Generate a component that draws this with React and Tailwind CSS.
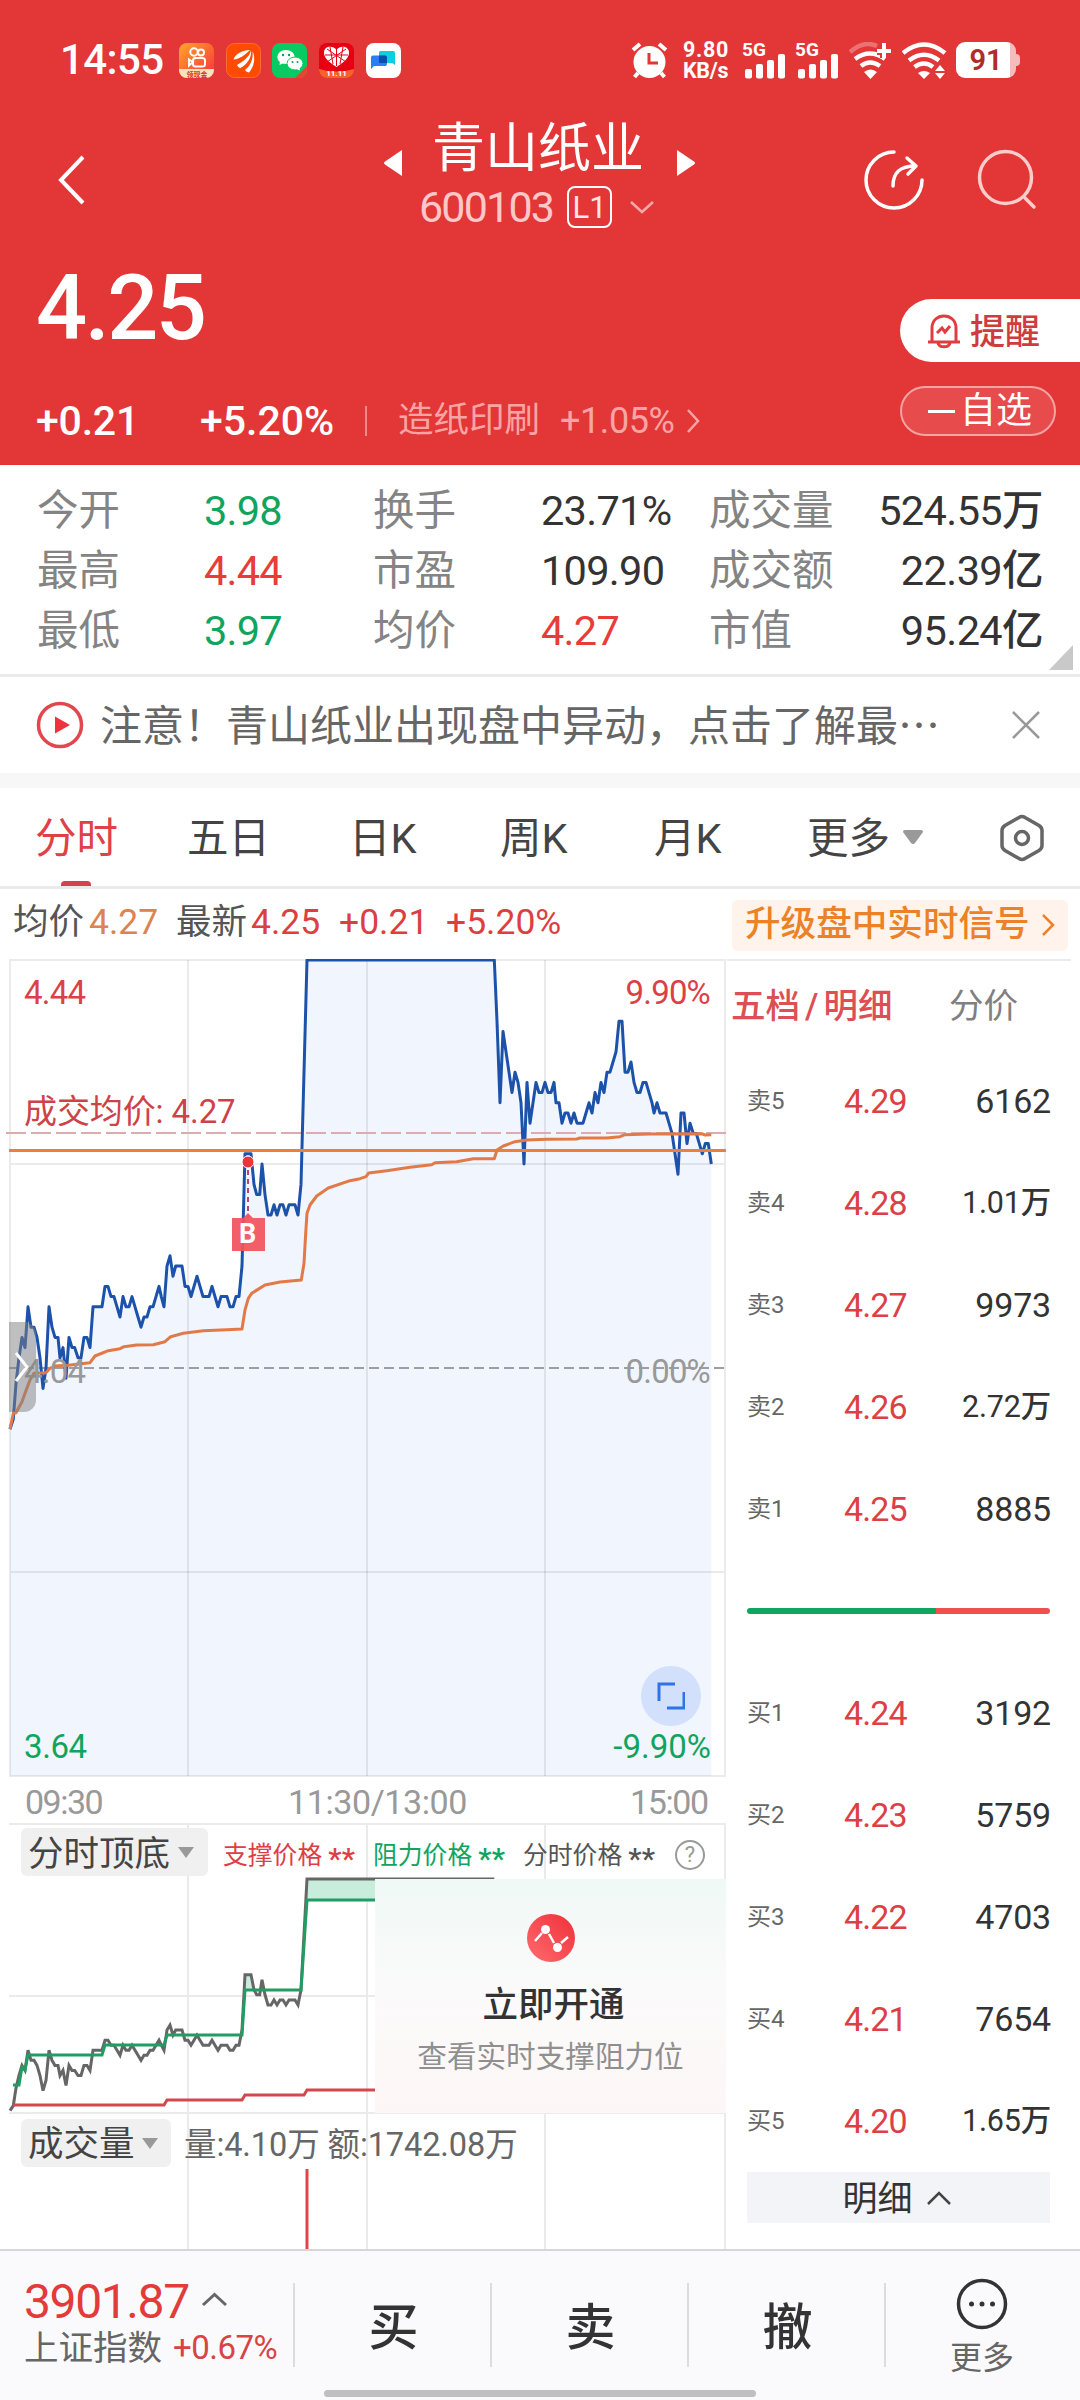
import React from 'react'

const STATS = [
  ['今开', '3.98', 'text-[#11a45e]', '换手', '23.71%', 'text-[#333]', '成交量', '524.55万'],
  ['最高', '4.44', 'text-[#e83c38]', '市盈', '109.90', 'text-[#333]', '成交额', '22.39亿'],
  ['最低', '3.97', 'text-[#11a45e]', '均价', '4.27', 'text-[#e83c38]', '市值', '95.24亿'],
]

const SELLS = [
  ['卖5', '4.29', '6162'],
  ['卖4', '4.28', '1.01万'],
  ['卖3', '4.27', '9973'],
  ['卖2', '4.26', '2.72万'],
  ['卖1', '4.25', '8885'],
]

const BUYS = [
  ['买1', '4.24', '3192'],
  ['买2', '4.23', '5759'],
  ['买3', '4.22', '4703'],
  ['买4', '4.21', '7654'],
  ['买5', '4.20', '1.65万'],
]

// [x, ticks above the previous close], x in thirds of a pixel
const PRICES = [
  [30, -6], [40, -5], [48, -1.5], [57, 1], [66, 3], [75, 2], [84, 6], [93, 4], [102, 4], [111, 3], [120, 1], [129, -2],
  [138, 0], [147, 6], [156, 4], [165, 3], [174, 3], [180, 1], [189, 2], [198, -1], [207, 3], [216, 2], [224, 2],
  [234, 1], [243, 1], [252, 3], [261, 3], [270, 2], [279, 6], [306, 6], [315, 8], [324, 8], [333, 7], [342, 7],
  [351, 6], [360, 5], [369, 7], [378, 6], [387, 6], [396, 7], [405, 6], [414, 5], [423, 4], [432, 5], [441, 5],
  [450, 6], [459, 6], [468, 7], [477, 8], [484, 7], [492, 6], [501, 10], [510, 11], [519, 9], [527, 10], [546, 10],
  [555, 8], [564, 8], [573, 7], [582, 8], [591, 9], [600, 8], [609, 7], [627, 7], [636, 8], [645, 7], [654, 6],
  [663, 7], [681, 7], [690, 6], [699, 6], [708, 7], [717, 7], [726, 10], [735, 21], [753, 21], [762, 18], [770, 17],
  [779, 17], [786, 20], [795, 17], [804, 15], [813, 15], [822, 16], [831, 15], [840, 16], [849, 16], [858, 15],
  [867, 16], [885, 16], [894, 15], [903, 18], [921, 40], [1483, 40], [1491, 34], [1500, 26], [1509, 33], [1518, 31],
  [1527, 29], [1536, 27], [1545, 29], [1554, 28], [1563, 26], [1572, 20], [1581, 28], [1590, 24], [1599, 26],
  [1608, 28], [1617, 27], [1626, 27], [1635, 28], [1644, 27], [1653, 27], [1662, 28], [1668, 26], [1677, 26],
  [1686, 24], [1695, 25], [1704, 25], [1713, 24], [1722, 25], [1731, 24], [1749, 24], [1758, 25], [1767, 26],
  [1776, 25], [1785, 27], [1794, 26], [1803, 28], [1812, 27], [1821, 29], [1830, 29], [1839, 30], [1848, 31],
  [1857, 34], [1866, 34], [1875, 29], [1884, 29], [1893, 30], [1902, 28], [1911, 27], [1920, 27], [1929, 28],
  [1938, 28], [1947, 27], [1956, 26], [1962, 25], [1971, 26], [1980, 25], [1998, 25], [2007, 24], [2016, 23],
  [2025, 21], [2034, 19], [2043, 25], [2052, 25], [2061, 22], [2070, 24], [2080, 23], [2089, 23], [2098, 22],
  [2107, 21], [2116, 22], [2125, 22], [2134, 20],
]

// running average, both axes in thirds of a pixel
const AVERAGE = [
  [30, 1467], [40, 1420], [48, 1418], [66, 1385], [75, 1360], [90, 1320], [102, 1300], [138, 1298], [150, 1285],
  [165, 1278], [205, 1276], [270, 1268], [285, 1248], [325, 1232], [360, 1226], [372, 1220], [410, 1215],
  [460, 1214], [495, 1205], [512, 1190], [550, 1180], [610, 1172], [680, 1169], [726, 1167], [735, 1110],
  [745, 1075], [755, 1060], [795, 1035], [840, 1026], [904, 1020], [912, 970], [917, 880], [921, 820], [930, 795],
  [950, 768], [985, 744], [1050, 722], [1080, 716], [1098, 710], [1106, 699], [1160, 692], [1230, 682],
  [1295, 674], [1305, 668], [1370, 665], [1420, 656], [1483, 656], [1491, 630], [1510, 618], [1545, 605],
  [1580, 600], [1640, 598], [1730, 597], [1740, 594], [1820, 594], [1860, 590], [1875, 584], [1950, 582],
  [2105, 581], [2115, 585], [2134, 584],
]

const price = PRICES.map(([x, t]) => `${(x / 3).toFixed(1)},${(409 - t * 10.2).toFixed(1)}`).join(' ')
const average = AVERAGE.map(([x, y]) => `${(x / 3).toFixed(1)},${(y / 3 - 19).toFixed(1)}`).join(' ')
const subPrice = PRICES.filter(([x]) => x < 1490)
  .map(([x, t]) => `${(x / 3).toFixed(1)},${(255.5 - t * 5.04).toFixed(1)}`)
  .join(' ')

const GRID_X = [188, 367, 545]

function StatusBar() {
  return (
    <div className="flex h-[92px] items-center pt-[28px] pl-[60px] text-white">
      <span className="w-[119px] text-[42px] leading-none font-medium tracking-[-0.6px]">14:55</span>
      <div className="flex w-[452px] gap-[11.7px]">
        <svg width="35" height="35" viewBox="0 0 35 35">
          <defs>
            <linearGradient id="kuai" x1="0" y1="0" x2="1" y2="1">
              <stop offset="0" stopColor="#ffa62b" />
              <stop offset="1" stopColor="#f8303c" />
            </linearGradient>
          </defs>
          <rect width="35" height="35" rx="8" fill="url(#kuai)" />
          <g fill="none" stroke="#fff" strokeWidth="2">
            <circle cx="15" cy="9" r="3.7" />
            <circle cx="22" cy="9.5" r="3" />
            <rect x="14" y="15" width="12" height="8.5" rx="2.5" />
            <path d="M14 19l-4-2.5v6z" />
          </g>
          <path d="M0 26h35v1a8 8 0 0 1-8 8H8a8 8 0 0 1-8-8z" fill="#fbe3bd" />
          <text x="18" y="33.5" fontSize="7" fontWeight="700" fill="#d5331f" textAnchor="middle">领现金</text>
        </svg>
        <svg width="35" height="35" viewBox="0 0 35 35">
          <rect x=".5" y=".5" width="34" height="34" rx="8" fill="#ff4b00" stroke="#ff6f30" />
          <path d="M24 7C17 7 9 11 7.500 16.500 14 16 19 12 24 7zM25 7.500C23 15 16 19 11 22c1 2 2 3 3.500 3C21 21 26 15 25 7.500zM26.500 8c1 8-2 15-7.500 19 1 1.500 2.500 2.500 4 2.500C28 24 30 15 26.500 8z" fill="#fff" />
        </svg>
        <svg width="35" height="35" viewBox="0 0 35 35">
          <rect width="35" height="35" rx="8" fill="#07cb62" />
          <path d="M35 23v4a8 8 0 0 1-8 8h-4z" fill="#e8442f" />
          <ellipse cx="14" cy="14" rx="8.7" ry="7" fill="#fff" />
          <path d="M8 18l-.5 4 4-2z" fill="#fff" />
          <ellipse cx="23" cy="20.5" rx="8" ry="6.5" fill="#fff" stroke="#07cb62" />
          <path d="M24 26l4 1.5-.5-3z" fill="#fff" />
          <g fill="#07a350">
            <circle cx="11" cy="12" r="1.2" />
            <circle cx="17" cy="12" r="1.2" />
            <circle cx="20.5" cy="19" r="1" />
            <circle cx="25.5" cy="19" r="1" />
          </g>
        </svg>
        <svg width="35" height="35" viewBox="0 0 35 35">
          <rect width="35" height="35" rx="8" fill="#e60012" />
          <path d="M0 26q17 5 35 0v1a8 8 0 0 1-8 8H8a8 8 0 0 1-8-8z" fill="#f5622c" />
          <path d="M17.5 24C8 18 5 14 5 9.5 5 3 14 2 17.5 7 21 2 30 3 30 9.5 30 14 27 18 17.5 24z" fill="#fff" />
          <path d="M8 6l19 13M27 6L8 19M17.5 6v17M6 12h23M11 4l3 17M24 4l-3 17" stroke="#e60012" strokeWidth="1" />
          <text x="17.5" y="33" fontSize="8" fontWeight="700" fill="#fff" textAnchor="middle">11.11</text>
        </svg>
        <svg width="35" height="35" viewBox="0 0 35 35">
          <rect width="35" height="35" rx="8" fill="#fff" />
          <path d="M14 8h13a2 2 0 0 1 2 2v12l-3-2H14a1 1 0 0 1-1-1V9z" fill="#0ccfdf" />
          <path d="M7 12.5h12a2 2 0 0 1 2 2V21a2 2 0 0 1-2 2H8l-3 3V14.5a2 2 0 0 1 2-2z" fill="#2a7df6" />
          <path d="M13 12.5h6a2 2 0 0 1 2 2V20h-7a1 1 0 0 1-1-1z" fill="#0a4ea8" />
        </svg>
      </div>
      <svg className="mr-[15px]" width="37" height="37" viewBox="0 0 37 37">
        <circle cx="18.5" cy="20" r="16" fill="#fff" />
        <path d="M2 8l7-6M35 8l-7-6M7 31l-3.5 4M30 31l3.5 4" stroke="#fff" strokeWidth="4" />
        <path d="M18 11v10h9" stroke="#e23737" strokeWidth="3" fill="none" />
      </svg>
      <div className="flex w-[60px] flex-col gap-[1px] text-[21.5px] leading-[20px] font-bold">
        <span className="tracking-[0.7px]">9.80</span>
        <span className="tracking-[-0.3px]">KB/s</span>
      </div>
      {[0, 1].map((i) => (
        <div key={i} className="relative mr-[10px] h-[37px] w-[43px]">
          <svg width="43" height="37" viewBox="0 0 43 37">
            <rect x="2" y="27" width="7" height="9.5" rx="2" fill="#fff" />
            <rect x="13" y="22" width="7" height="14.5" rx="2" fill="#fff" />
            <rect x="24" y="18" width="7" height="18.5" rx="2" fill="#fff" />
            <rect x="35" y="12" width="7" height="24.5" rx="2" fill="#fff" />
          </svg>
          <span className="absolute top-[-3px] left-[-1px] text-[19px] leading-[22px] font-bold">5G</span>
        </div>
      ))}
      <svg className="mr-[10px]" width="43" height="37" viewBox="0 0 43 37">
        <g fill="none" stroke="#fff" strokeWidth="4.5">
          <path d="M1 10Q15-2 28 4" opacity=".3" />
          <path d="M6 17Q21 6 36 17M12 24Q21 17 31 24" />
        </g>
        <path d="M15 30q6.500-5 13 0l-6.500 7z" fill="#fff" />
        <path d="M35 1v15M28 9h14" stroke="#e33637" strokeWidth="8" />
        <path d="M35 1v15M28 9h14" stroke="#fff" strokeWidth="4" />
      </svg>
      <svg className="mr-[9px]" width="45" height="37" viewBox="0 0 45 37">
        <g fill="none" stroke="#fff" strokeWidth="4.5">
          <path d="M1 11Q22-6 43 11M7 18.5Q22 7 37 18.5M12.5 25Q22 18 31 25" />
        </g>
        <path d="M16 31q6-4 12 0l-6 6z" fill="#fff" />
        <path d="M33 29l5-6 5 6zM33 31l5 6 5-6z" fill="#fff" />
      </svg>
      <div className="flex items-center">
        <div className="flex h-9 w-[60px] items-center justify-center overflow-hidden rounded-[9px] bg-[linear-gradient(90deg,#fff_54px,#f6bcbc_54px)] text-[29px] leading-none font-semibold text-[#b22b2b]">
          91
        </div>
        <div className="h-3 w-1 rounded-r-sm bg-[#f6bcbc]" />
      </div>
    </div>
  )
}

function Header() {
  return (
    <header className="h-[465px] bg-[#e33637] text-white">
      <StatusBar />
      <div className="flex h-[150px] items-start pl-[57px]">
        <svg className="mt-[63px]" width="30" height="50" viewBox="0 0 30 50">
          <path d="M26 2L4 25l22 23" fill="none" stroke="#fff" strokeWidth="4" />
        </svg>
        <div className="ml-[296px] w-[313px]">
          <div className="mt-[28px] flex h-[58px] items-center">
            <svg width="20" height="30" viewBox="0 0 20 30" className="mt-[28px] shrink-0">
              <path d="M19 2v26L2 16.500q-2-1.500 0-3z" fill="#fff" />
            </svg>
            <span className="ml-[29px] w-[214px] shrink-0 text-[53px] leading-[58px] whitespace-nowrap">青山纸业</span>
            <svg width="20" height="30" viewBox="0 0 20 30" className="mt-[28px] ml-[30px] shrink-0">
              <path d="M1 2v26l17-11.500q2-1.500 0-3z" fill="#fff" />
            </svg>
          </div>
          <div className="mt-[7px] flex items-center pl-[36px]">
            <span className="w-[148px] text-[43px] leading-[44px] tracking-[-1.8px] text-[#ffc8c8]">600103</span>
            <span className="flex h-[42px] w-[45px] items-center justify-center rounded-lg border-[2.5px] border-white text-[31px] leading-none text-[#ffe6e6]">L1</span>
            <svg className="ml-[17px]" width="26" height="16" viewBox="0 0 26 16">
              <path d="M2 3l11 10L24 3" fill="none" stroke="#f7a9a9" strokeWidth="2.5" />
            </svg>
          </div>
        </div>
        <svg className="mt-[57px] ml-[167px]" width="62" height="62" viewBox="0 0 62 62">
          <path d="M31 3A28 28 0 1 0 59 31" fill="none" stroke="#fff" strokeWidth="3.5" strokeLinecap="round" />
          <path d="M30 37c0-13 6-20 23-20M44 9l9 8-8 8" fill="none" stroke="#fff" strokeWidth="3.5" strokeLinecap="round" strokeLinejoin="round" />
        </svg>
        <svg className="mt-[57px] ml-[52px]" width="62" height="62" viewBox="0 0 62 62">
          <circle cx="28.5" cy="28.5" r="26" fill="none" stroke="#fcc" strokeWidth="3.5" />
          <path d="M48 49l9 9" stroke="#fcc" strokeWidth="3.5" strokeLinecap="round" />
        </svg>
      </div>
      <div className="flex justify-between pl-[36px]">
        <div>
          <div className="mt-[21px] text-[90px] leading-[92px] font-medium tracking-[-2.5px]">4.25</div>
          <div className="mt-[36px] flex h-[60px] items-center text-[41px] leading-none">
            <span className="w-[164px] font-medium tracking-[-0.2px]">+0.21</span>
            <span className="w-[165px] font-medium">+5.20%</span>
            <span className="h-[30px] w-[2px] bg-[#f0888a]" />
            <span className="ml-[31px] w-[162px] text-[35.5px] text-[#f9a4a4]">造纸印刷</span>
            <span className="text-[36px] tracking-[-0.4px] text-[#f9a4a4]">+1.05%</span>
            <svg className="ml-[10px]" width="16" height="26" viewBox="0 0 16 26">
              <path d="M3 2l10 11L3 24" fill="none" stroke="#f9a4a4" strokeWidth="2.5" />
            </svg>
          </div>
        </div>
        <div className="w-[180px] pt-[57px]">
          <div className="flex h-[63px] items-center rounded-l-full bg-white pl-[26px] text-[#cf3b3f]">
            <svg width="36" height="36" viewBox="0 0 36 36" fill="none" stroke="#e23c40" strokeWidth="3">
              <path d="M2 29h32M6 28V15C6-1 30-1 30 15v13M12 30c1 5 11 5 12 0" />
              <path d="M11 20l5-5 3 4 5-6" />
            </svg>
            <span className="mt-[3px] ml-2 text-[35px] leading-none font-medium">提醒</span>
          </div>
          <div className="mt-6 flex h-[50px] w-[156px] items-center rounded-full border-2 border-[#f5a3a3] bg-[#e74b4c] pl-[26px]">
            <span className="h-[3px] w-[27px] bg-white" />
            <span className="ml-[5px] text-[36px] leading-none">自选</span>
          </div>
        </div>
      </div>
    </header>
  )
}

function Stats() {
  return (
    <section className="relative h-[212px] border-b-[3px] border-[#ebebeb] bg-white pt-[16px] pl-[37px]">
      {STATS.map(([a, av, ac, b, bv, bc, c, cv]) => (
        <div key={a} className="flex h-[60px] items-center text-[41.5px] leading-none">
          <span className="w-[167px] text-[#848484]">{a}</span>
          <span className={`w-[169px] font-[450] tracking-[-0.8px] ${ac}`}>{av}</span>
          <span className="w-[168px] text-[#848484]">{b}</span>
          <span className={`w-[168px] font-[450] tracking-[-0.7px] ${bc}`}>{bv}</span>
          <span className="w-[130px] text-[#848484]">{c}</span>
          <span className="w-[204px] text-right font-[450] tracking-[-0.6px] text-[#333]">{cv}</span>
        </div>
      ))}
      <svg className="absolute right-[7px] bottom-[4px]" width="24" height="25" viewBox="0 0 24 25">
        <path d="M24 0v25H0z" fill="#c9c9c9" />
      </svg>
    </section>
  )
}

function Notice() {
  return (
    <section className="flex h-[96px] items-center pl-[36px]">
      <svg width="48" height="48" viewBox="0 0 48 48">
        <circle cx="24" cy="24" r="21.5" fill="none" stroke="#e2474d" strokeWidth="3.5" />
        <path d="M19 15.5v17L34 24z" fill="#f0323c" />
      </svg>
      <span className="mt-[3px] ml-4 w-[912px] text-[42px] leading-none whitespace-nowrap text-[#666]">注意！青山纸业出现盘中异动，点击了解最⋯</span>
      <svg width="28" height="28" viewBox="0 0 28 28">
        <path d="M1 1l26 26M27 1L1 27" stroke="#999" strokeWidth="2.5" />
      </svg>
    </section>
  )
}

function Tabs() {
  return (
    <nav className="flex h-[101px] items-center border-b-[3px] border-[#ebebeb] pt-[3px] pl-[35px] text-[41.5px] leading-none text-[#444]">
      <div className="relative flex h-full w-[152px] items-center text-[#e04047]">
        分时
        <div className="absolute bottom-0 left-[26px] h-[5px] w-[30px] rounded-t bg-[#d2434a]" />
      </div>
      <span className="w-[162px]">五日</span>
      <span className="w-[151px]">日K</span>
      <span className="w-[154px]">周K</span>
      <span className="w-[153px]">月K</span>
      <span className="w-[95px]">更多</span>
      <svg className="-mt-1 w-[22px]" height="14" viewBox="0 0 22 14">
        <path d="M1 2q0-2 2-2h16q2 0 2 2l-8 11q-2 2-4 0z" fill="#999" />
      </svg>
      <svg className="-mt-0.5 ml-[74px]" width="48" height="48" viewBox="0 0 48 48" fill="none" stroke="#666" strokeWidth="3.5">
        <path d="M21 3.500q3-2 6 0l14 8q3 2 3 5v15q0 3-3 5l-14 8q-3 2-6 0l-14-8q-3-2-3-5v-15q0-3 3-5z" />
        <circle cx="24" cy="24" r="6.5" />
      </svg>
    </nav>
  )
}

function QuoteLine() {
  return (
    <div className="flex h-[70px] items-center pl-[13px] text-[35.5px] leading-none">
      <div className="flex w-[719px] items-center pb-[3px]">
        <span className="w-[76px] text-[#555]">均价</span>
        <span className="w-[87px] font-[450] text-[#dc8350]">4.27</span>
        <span className="w-[75px] text-[#555]">最新</span>
        <span className="w-[88px] font-[450] text-[#dc3f3f]">4.25</span>
        <span className="w-[107px] font-[450] text-[#dc3f3f]">+0.21</span>
        <span className="font-[450] text-[#dc3f3f]">+5.20%</span>
      </div>
      <div className="mt-0.5 flex h-[51px] w-[336px] items-center rounded-md bg-[#fff3eb] pl-[13px] text-[#ec8128]">
        <span className="w-[285px] text-[35.6px] font-medium whitespace-nowrap">升级盘中实时信号</span>
        <svg className="ml-2.5" width="16" height="24" viewBox="0 0 16 24">
          <path d="M3 2l10 10L3 22" fill="none" stroke="#ec8128" strokeWidth="2.5" />
        </svg>
      </div>
    </div>
  )
}

function PriceChart() {
  return (
    <div className="relative h-[818px] w-[727px]">
      <svg width="727" height="818" viewBox="0 0 727 818">
        <polygon points={`${price} 711.3,817 10,817`} fill="#f0f5fe" />
        <g stroke="#000" strokeOpacity=".08" strokeWidth="2">
          {GRID_X.map((x) => (
            <path key={x} d={`M${x} 1v816`} />
          ))}
          <path d="M9 1h717M9 205h717M9 613h717M9 817h717M10 0v818M725 0v818" />
        </g>
        <path d="M9 409h718" stroke="#9b9ea3" strokeWidth="2" strokeDasharray="10 5" />
        <path d="M6 174h720" stroke="#dfa9b0" strokeWidth="2" strokeDasharray="20 5" />
        <polyline points={price} fill="none" stroke="#1d52ab" strokeWidth="3" strokeLinejoin="round" />
        <path d="M9 191.500h717" stroke="#e8803f" strokeWidth="3" />
        <polyline points={average} fill="none" stroke="#e27a48" strokeWidth="3" strokeLinejoin="round" />
        <path d="M248 211v48" stroke="#b8456e" strokeWidth="2" strokeDasharray="5 4" />
        <circle cx="248" cy="203" r="6" fill="#f0323c" stroke="#fff" strokeWidth="1" />
        <path d="M232 259h11l5-5 5 5h12v33h-33z" fill="#f15560" fillOpacity=".94" />
      </svg>
      <span className="absolute top-[275px] left-[239px] -translate-y-1/2 text-[27px] leading-none font-bold text-white">B</span>
      <span className="absolute top-[17px] left-[24px] text-[33px] leading-none font-[450] tracking-[-0.8px] text-[#dc4046]">4.44</span>
      <span className="absolute top-[17px] right-[17px] text-[33px] leading-none font-[450] tracking-[-0.8px] text-[#dc4046]">9.90%</span>
      <span className="absolute top-[136px] left-[24px] text-[33px] leading-none tracking-[-0.1px] text-[#cd4249]">成交均价: 4.27</span>
      <span className="absolute top-[396px] left-[24px] text-[33px] leading-none font-[450] tracking-[-0.8px] text-[#999]">4.04</span>
      <span className="absolute top-[396px] right-[17px] text-[33px] leading-none font-[450] tracking-[-0.8px] text-[#999]">0.00%</span>
      <span className="absolute top-[771px] left-[24px] text-[33px] leading-none font-[450] tracking-[-0.4px] text-[#11a45e]">3.64</span>
      <span className="absolute top-[771px] right-[16px] text-[33px] leading-none font-[450] text-[#11a45e]">-9.90%</span>
      <div className="absolute top-[363px] left-[9px] flex h-[90px] w-[27px] items-center rounded-r-[12px] bg-[#808080]/50 pl-1">
        <svg width="18" height="32" viewBox="0 0 18 32">
          <path d="M3 2l11 14L3 30" fill="none" stroke="#fff" strokeWidth="3" />
        </svg>
      </div>
      <div className="absolute top-[707px] left-[641px] flex h-[60px] w-[60px] items-center justify-center rounded-full bg-[#d2e0fc]">
        <svg width="28" height="28" viewBox="0 0 28 28" fill="none" stroke="#2f74e6" strokeWidth="3">
          <path d="M2 19V2h16M27 10v16H10" />
        </svg>
      </div>
    </div>
  )
}

function Caret() {
  return (
    <svg width="16" height="11" viewBox="0 0 16 11">
      <path d="M0 0h16L8 11z" fill="#999" />
    </svg>
  )
}

function SupportChart() {
  return (
    <div className="relative h-[289px] w-[727px]">
      <svg className="absolute inset-0" width="727" height="289" viewBox="0 0 727 289">
        <g stroke="#ebebeb" strokeWidth="2">
          {GRID_X.map((x) => (
            <path key={x} d={`M${x} 0v289`} />
          ))}
          <path d="M9 171h717M9 288h717M725 0v289" />
        </g>
        <path d="M307 54h68v21h-68zM245 165v-15h6l4 15z" fill="#c9eddc" />
        <polyline points={subPrice} fill="none" stroke="#666" strokeWidth="3" />
        <path d="M13 260h6l3-18 3 3 3-15h74l3-10h59l3-10h75l3-45h56l6-90h68" fill="none" stroke="#219c63" strokeWidth="3" />
        <path d="M13 280h151l3-5h75l3-5h59l3-5h68" fill="none" stroke="#d2494d" strokeWidth="3" />
      </svg>
      <div className="relative flex h-[54px] items-center pl-[21px] text-[24.8px] leading-none">
        <div className="flex h-[48px] w-[187px] items-center gap-2 rounded-md bg-[#f0f0f0] pl-[7px] text-[35.5px] text-[#444]">
          <span className="mt-1.5">分时顶底</span> <Caret />
        </div>
        <span className="mt-2 ml-[15px] w-[150px] text-[#dc4046]">支撑价格 <b className="align-[-5px] text-[30px] leading-[20px] font-medium">**</b></span>
        <span className="mt-2 w-[150px] text-[#11a45e]">阻力价格 <b className="align-[-5px] text-[30px] leading-[20px] font-medium">**</b></span>
        <span className="mt-2 w-[152px] text-[#555]">分时价格 <b className="align-[-5px] text-[30px] leading-[20px] font-medium">**</b></span>
        <span className="mt-1.5 flex h-[30px] w-[30px] items-center justify-center rounded-full border-2 border-[#999] text-[22px] text-[#999]">?</span>
      </div>
      <div className="relative ml-[375px] flex h-[234px] w-[351px] flex-col items-center bg-[linear-gradient(180deg,#f0f9f6,#fbfafa_50%,#fdf6f6)] pt-[35px]">
        <svg width="48" height="48" viewBox="0 0 48 48">
          <defs>
            <linearGradient id="promo" x1="0" y1="1" x2="1" y2="0">
              <stop offset="0" stopColor="#ff6b6f" />
              <stop offset="1" stopColor="#ef3039" />
            </linearGradient>
          </defs>
          <circle cx="24" cy="24" r="24" fill="url(#promo)" />
          <path d="M8 27l7-8M22 20l5 9M34 29l7-6" stroke="#fff" strokeWidth="2.5" />
          <circle cx="18.5" cy="15.5" r="4.5" fill="#fff" />
          <circle cx="30.5" cy="33.5" r="4.5" fill="#fff" />
        </svg>
        <span className="mt-[24px] ml-[6px] text-[35.5px] leading-[38px] font-medium text-[#333]">立即开通</span>
        <span className="mt-[17px] text-[29.6px] leading-[32px] text-[#8f8f8f]">查看实时支撑阻力位</span>
      </div>
    </div>
  )
}

function VolumeChart() {
  return (
    <div className="relative h-[135px] w-[727px]">
      <svg className="absolute inset-0" width="727" height="135" viewBox="0 0 727 135">
        <g stroke="#ebebeb" strokeWidth="2">
          {GRID_X.map((x) => (
            <path key={x} d={`M${x} 0v135`} />
          ))}
          <path d="M725 0v135" />
        </g>
        <path d="M307 55v80" stroke="#e04448" strokeWidth="3" />
      </svg>
      <div className="relative flex items-center pt-[5px] pl-[21px]">
        <div className="flex h-[48px] w-[150px] items-center gap-[7px] rounded-md bg-[#f0f0f0] pl-[7px] text-[35.5px] leading-none text-[#444]">
          <span className="mt-1">成交量</span> <Caret />
        </div>
        <span className="mt-1 ml-[13px] text-[32.5px] leading-none tracking-[-0.1px] text-[#666]">量:4.10万 额:1742.08万</span>
      </div>
    </div>
  )
}

function Level({ row }) {
  const [name, value, amount] = row
  return (
    <div className="flex h-[102px] items-center pl-[20px] leading-none">
      <span className="w-[97px] text-[24px] text-[#666]">{name}</span>
      <span className="w-[90px] text-[34px] font-[450] tracking-[-0.9px] text-[#dc4046]">{value}</span>
      <span className={`w-[117px] text-right font-[450] tracking-[-0.2px] text-[#333] ${amount.includes('万') ? 'text-[30.5px]' : 'text-[34px]'}`}>{amount}</span>
    </div>
  )
}

function OrderBook() {
  return (
    <aside className="h-[1290px] w-[353px]">
      <div className="h-[2px] w-[344px] bg-[#ebebeb]" />
      <div className="flex h-[89px] items-center pt-px pl-[4px] text-[34.5px] leading-none">
        <span className="w-[218px] font-medium text-[#dc5055]">五档<span className="px-[5px]">/</span>明细</span>
        <span className="text-[#808080]">分价</span>
      </div>
      {SELLS.map((row) => (
        <Level key={row[0]} row={row} />
      ))}
      <div className="flex h-[102px] items-center pl-[20px]">
        <div className="flex h-[6px] w-[303px] overflow-hidden rounded-full">
          <div className="h-full w-[189px] bg-[#11a45e]" />
          <div className="h-full flex-1 bg-[#ee5051]" />
        </div>
      </div>
      {BUYS.map((row) => (
        <Level key={row[0]} row={row} />
      ))}
      <div className="ml-[20px] flex h-[51px] w-[303px] items-center justify-center gap-[13px] bg-[#f3f4f8] pr-[3px] text-[35px] leading-none text-[#333]">
        <span className="mt-1">明细</span>
        <svg width="26" height="16" viewBox="0 0 26 16">
          <path d="M2 14L13 3l11 11" fill="none" stroke="#444" strokeWidth="2.5" />
        </svg>
      </div>
    </aside>
  )
}

function BottomBar() {
  return (
    <footer className="h-[151px] border-t-2 border-[#d6d6d8] bg-[#fafafc] pt-[6px]">
      <div className="flex h-[136px] items-center">
        <div className="w-[293px] pl-[24px]">
          <div className="mt-[-9px] flex items-center">
            <span className="text-[48px] leading-[56px] font-[450] tracking-[-1.4px] text-[#e23b39]">3901.87</span>
            <svg className="-mt-1.5 ml-3" width="27" height="15" viewBox="0 0 27 15">
              <path d="M2 13L13.500 2.500 25 13" fill="none" stroke="#666" strokeWidth="3" />
            </svg>
          </div>
          <div className="-mt-px flex items-center leading-[38px]">
            <span className="w-[149px] text-[34.5px] text-[#666]">上证指数</span>
            <span className="text-[33px] font-[450] tracking-[-0.5px] text-[#d84346]">+0.67%</span>
          </div>
        </div>
        {['买', '卖', '撤'].map((label) => (
          <div key={label} className="flex h-[84px] w-[197px] items-center justify-center border-l-2 border-[#dcdcde] pt-[5px] pl-[2px] text-[50px] leading-none font-medium text-[#333]">
            {label}
          </div>
        ))}
        <div className="flex h-[84px] flex-1 flex-col items-center border-l-2 border-[#dcdcde] pr-[2px]">
          <svg className="-mt-[5px] shrink-0" width="52" height="52" viewBox="0 0 52 52">
            <circle cx="26" cy="26" r="23.5" fill="none" stroke="#333" strokeWidth="3.5" />
            <g fill="#333">
              <circle cx="15.5" cy="26" r="2.5" />
              <circle cx="26" cy="26" r="2.5" />
              <circle cx="36.5" cy="26" r="2.5" />
            </g>
          </svg>
          <span className="mt-[11px] text-[32px] leading-[34px] text-[#666]">更多</span>
        </div>
      </div>
      <div className="mx-auto -mt-[3px] h-[7px] w-[432px] rounded-full bg-[#bfbfc1]" />
    </footer>
  )
}

export default function App() {
  return (
    <div className="h-[2400px] w-[1080px] overflow-hidden bg-white font-[Roboto,'Noto_Sans_CJK_SC',sans-serif]">
      <Header />
      <Stats />
      <Notice />
      <div className="h-[15px] bg-[#f7f7f7]" />
      <Tabs />
      <QuoteLine />
      <div className="flex">
        <div className="w-[727px]">
          <PriceChart />
          <div className="ml-[9px] flex h-[48px] w-[717px] items-center border-b-2 border-[#ebebeb] pt-[3px] pl-[16px] text-[34px] leading-none text-[#999]">
            <span className="w-[263px] tracking-[-1.5px]">09:30</span>
            <span className="w-[342px] tracking-[-0.4px]">11:30/13:00</span>
            <span className="tracking-[-1.4px]">15:00</span>
          </div>
          <SupportChart />
          <VolumeChart />
        </div>
        <OrderBook />
      </div>
      <BottomBar />
    </div>
  )
}
